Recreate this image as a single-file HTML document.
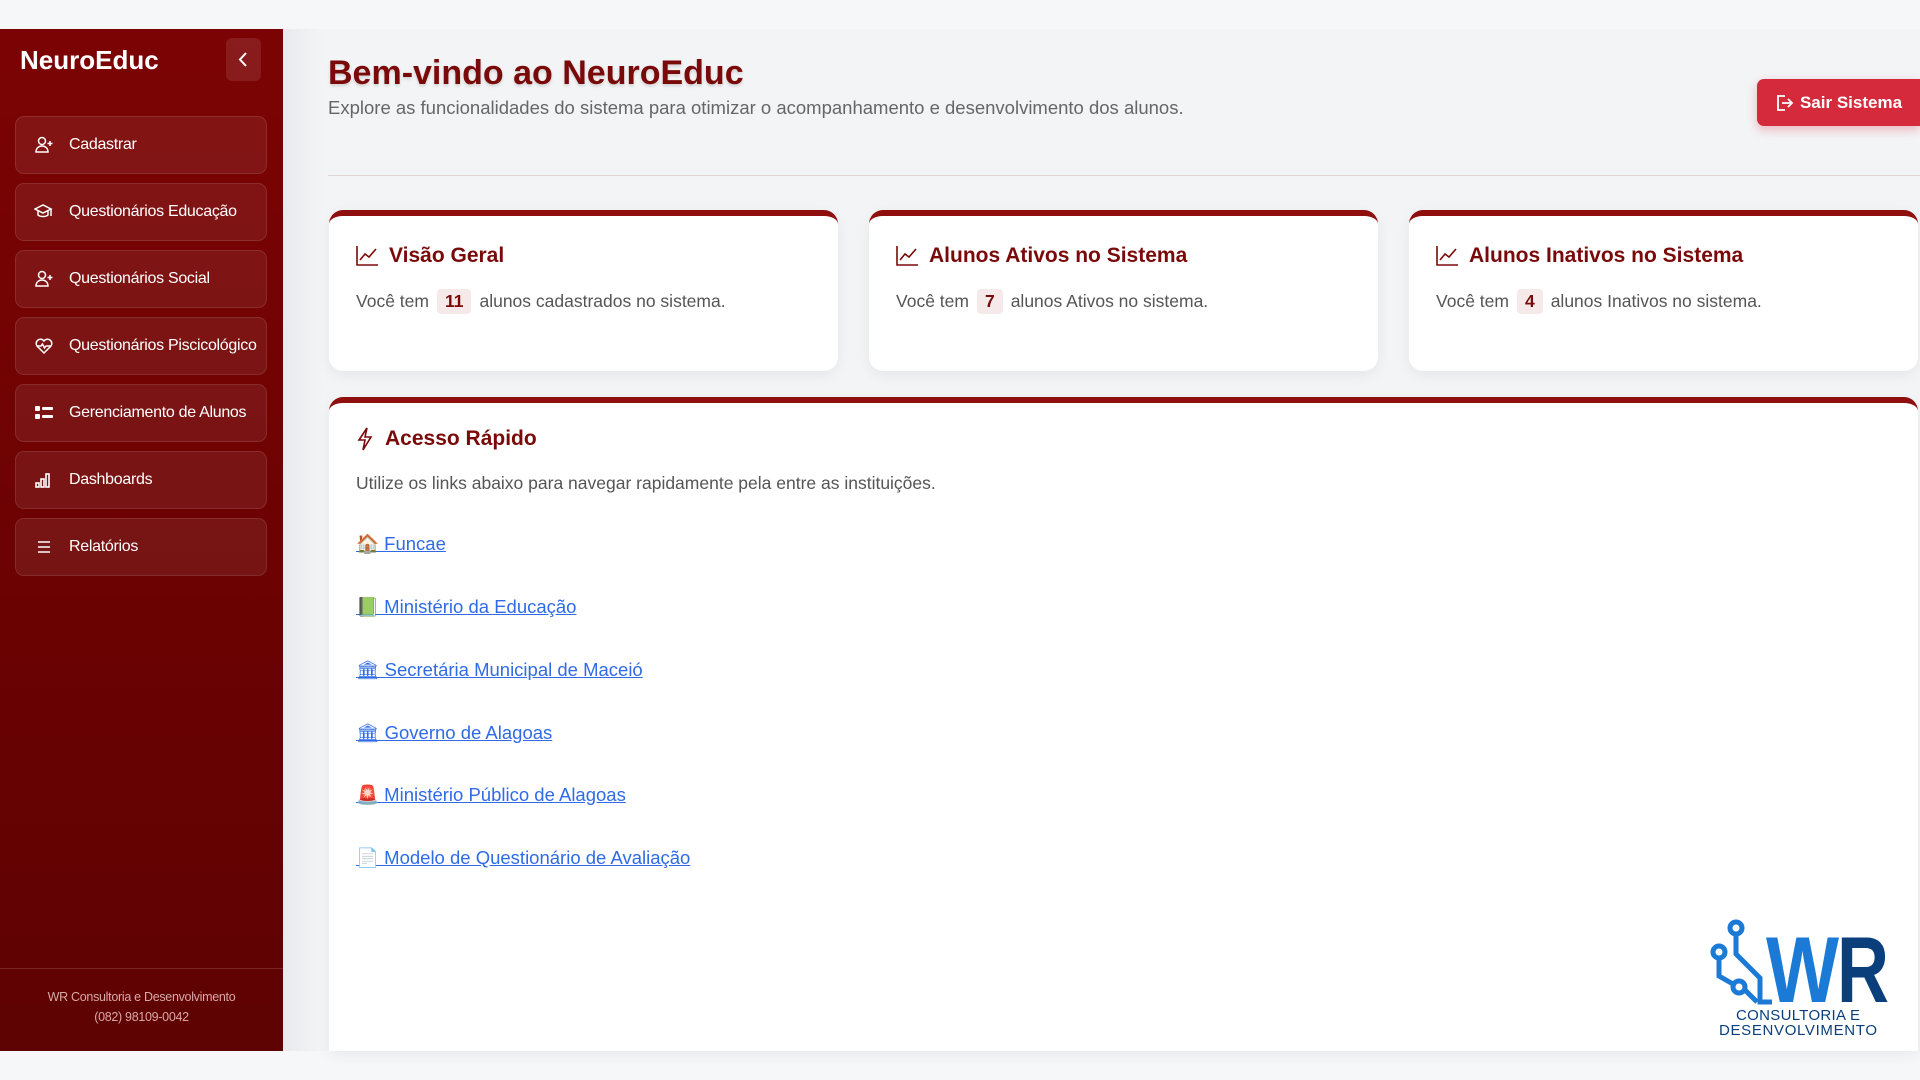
<!DOCTYPE html>
<html><head><meta charset="utf-8"><style>
*{box-sizing:border-box;margin:0;padding:0}
body{width:1920px;height:1080px;background:#f6f7f9;font-family:"Liberation Sans",sans-serif;position:relative;overflow:hidden}
.sb{position:absolute;left:0;top:29px;width:283px;height:1022px;background:linear-gradient(180deg,#7c0303,#5e0202)}
.brand{position:absolute;left:20px;top:16px;color:#fff;font-size:26px;font-weight:bold}
.col{position:absolute;left:226px;top:9px;width:35px;height:43px;background:rgba(255,255,255,.1);border-radius:6px}
.item{position:absolute;left:15px;width:252px;height:58px;background:rgba(255,255,255,.07);border:1px solid rgba(255,255,255,.1);border-radius:9px;color:#fff;font-size:16px;display:flex;align-items:center;padding-left:18px;white-space:nowrap;letter-spacing:-.3px}
.item svg{width:20px;height:20px;margin-right:15px;flex:none}
.foot{position:absolute;left:0;top:939px;width:283px;border-top:1px solid rgba(255,255,255,.15);text-align:center;color:#d8a9a9;font-size:12.5px;line-height:20px;padding-top:18px;letter-spacing:-.3px}
.main{position:absolute;left:283px;top:29px;width:1637px;height:1022px;background:linear-gradient(90deg,#e9eaed,#f3f4f6 40px,#f3f4f6)}
h1{position:absolute;left:328px;top:54px;font-size:34px;color:#7a0a0a;font-weight:bold;text-shadow:0 2px 3px rgba(0,0,0,.15)}
.sub{position:absolute;left:328px;top:97px;font-size:18.5px;color:#666}
.hr{position:absolute;left:328px;top:175px;width:1592px;height:1px;background:#e3d6d6}
.btn{position:absolute;left:1757px;top:79px;width:163px;height:47px;background:#d42a3c;border-radius:7px 0 0 7px;color:#fff;font-weight:bold;font-size:17px;display:flex;align-items:center;justify-content:center;box-shadow:0 4px 10px rgba(212,42,60,.3)}
.card{position:absolute;background:#fff;border-radius:14px;border-top:6px solid #8f0e0e;box-shadow:0 4px 14px rgba(0,0,0,.06)}
.ct{position:absolute;left:26px;top:28px;font-size:21px;font-weight:bold;color:#7a0a0a;display:flex;align-items:center}
.ct svg{margin-right:10px}
.cx{position:absolute;left:27px;top:73px;font-size:17.5px;color:#555;display:flex;align-items:center}
.num{display:inline-block;background:#f6e9e9;color:#7a0a0a;font-weight:bold;padding:2px 8px;border-radius:4px;margin:0 8px}
.lk{position:absolute;left:356px;font-size:18.5px;color:#2f6be6;text-decoration:underline}
</style></head><body>
<div class="sb">
<div class="brand">NeuroEduc</div>
<div class="col"><svg width="35" height="43" viewBox="0 0 35 43"><path d="M20 15l-6 6.5 6 6.5" fill="none" stroke="#fff" stroke-width="2"/></svg></div>
<div class="item" style="top:87px"><svg viewBox="0 0 20 20" fill="none" stroke="#fff" stroke-width="1.5"><circle cx="8" cy="6" r="3.5"/><path d="M2 17c0-4 3-6 6-6s6 2 6 6z"/><path d="M16 6v5M13.5 8.5h5"/></svg>Cadastrar</div>
<div class="item" style="top:154px"><svg viewBox="0 0 20 20" fill="none" stroke="#fff" stroke-width="1.5"><path d="M1 7l8-4 8 4-8 4z"/><path d="M4 9v4c2 2 8 2 10 0V9"/><path d="M17 7v7"/></svg>Questionários Educação</div>
<div class="item" style="top:221px"><svg viewBox="0 0 20 20" fill="none" stroke="#fff" stroke-width="1.5"><circle cx="8" cy="6" r="3.5"/><path d="M2 17c0-4 3-6 6-6s6 2 6 6z"/><path d="M16 6v5M13.5 8.5h5"/></svg>Questionários Social</div>
<div class="item" style="top:288px"><svg viewBox="0 0 20 20" fill="none" stroke="#fff" stroke-width="1.5"><path d="M10 17L3 10a4 4 0 017-5 4 4 0 017 5z"/><path d="M3 10h4l1.5-2 2 4 1.5-2h5"/></svg>Questionários Piscicológico</div>
<div class="item" style="top:355px"><svg viewBox="0 0 20 20" fill="#fff"><rect x="1" y="3" width="5" height="5" rx="1"/><rect x="8" y="4" width="11" height="3" rx="1"/><rect x="1" y="11" width="5" height="5" rx="1"/><rect x="8" y="12" width="11" height="3" rx="1"/></svg>Gerenciamento de Alunos</div>
<div class="item" style="top:422px"><svg viewBox="0 0 20 20" fill="none" stroke="#fff" stroke-width="1.6"><rect x="2" y="13" width="3" height="4"/><rect x="7" y="9" width="3" height="8"/><rect x="12" y="4" width="3" height="13"/></svg>Dashboards</div>
<div class="item" style="top:489px"><svg viewBox="0 0 20 20" stroke="#fff" stroke-width="1.6"><path d="M4 5h12M4 10h12M4 15h12"/></svg>Relatórios</div>
<div class="foot">WR Consultoria e Desenvolvimento<br>(082) 98109-0042</div>
</div>
<div class="main"></div>
<h1>Bem-vindo ao NeuroEduc</h1>
<div class="sub">Explore as funcionalidades do sistema para otimizar o acompanhamento e desenvolvimento dos alunos.</div>
<div class="btn"><svg width="20" height="18" viewBox="0 0 20 18" fill="none" stroke="#fff" stroke-width="1.8" style="margin-right:5px"><path d="M10 2H3v14h7"/><path d="M7 9h10M13 5l4 4-4 4"/></svg>Sair Sistema</div>
<div class="hr"></div>

<div class="card" style="left:329px;top:210px;width:509px;height:161px"><div class="ct"><svg width="24" height="22" viewBox="0 0 24 22" fill="none" stroke="#7a0a0a" stroke-width="1.6"><path d="M2 1v19h21"/><path d="M5 15l5-6 4 3 7-8"/></svg>Visão Geral</div><div class="cx">Você tem <span class="num">11</span> alunos cadastrados no sistema.</div></div>
<div class="card" style="left:869px;top:210px;width:509px;height:161px"><div class="ct"><svg width="24" height="22" viewBox="0 0 24 22" fill="none" stroke="#7a0a0a" stroke-width="1.6"><path d="M2 1v19h21"/><path d="M5 15l5-6 4 3 7-8"/></svg>Alunos Ativos no Sistema</div><div class="cx">Você tem <span class="num">7</span> alunos Ativos no sistema.</div></div>
<div class="card" style="left:1409px;top:210px;width:509px;height:161px"><div class="ct"><svg width="24" height="22" viewBox="0 0 24 22" fill="none" stroke="#7a0a0a" stroke-width="1.6"><path d="M2 1v19h21"/><path d="M5 15l5-6 4 3 7-8"/></svg>Alunos Inativos no Sistema</div><div class="cx">Você tem <span class="num">4</span> alunos Inativos no sistema.</div></div>

<div class="card" style="left:329px;top:397px;width:1589px;height:654px;border-radius:14px 14px 0 0"><div class="ct" style="top:24px"><svg width="20" height="24" viewBox="0 0 20 24" fill="none" stroke="#7a0a0a" stroke-width="1.6"><path d="M12 1L4 13h6l-2 10 8-13h-6z"/></svg>Acesso Rápido</div><div class="cx" style="top:70px">Utilize os links abaixo para navegar rapidamente pela entre as instituições.</div></div>
<div class="lk" style="top:533px">🏠 Funcae</div>
<div class="lk" style="top:596px">📗 Ministério da Educação</div>
<div class="lk" style="top:659px">🏛 Secretária Municipal de Maceió</div>
<div class="lk" style="top:722px">🏛 Governo de Alagoas</div>
<div class="lk" style="top:784px">🚨 Ministério Público de Alagoas</div>
<div class="lk" style="top:847px">📄 Modelo de Questionário de Avaliação</div>

<svg style="position:absolute;left:1700px;top:900px" width="210" height="140" viewBox="0 0 210 140">
<g fill="none" stroke="#1b7ad6" stroke-width="5"><circle cx="36" cy="28" r="6"/><circle cx="19" cy="52" r="6"/><circle cx="39" cy="87" r="6"/><path d="M36 34v20l24 24v24h12"/><path d="M19 58v18l14 8M45 90l12 12"/></g>
<text x="66" y="102" textLength="73" lengthAdjust="spacingAndGlyphs" font-family="Liberation Sans" font-weight="bold" font-size="94" fill="#1b7ad6">W</text>
<text x="137" y="102" textLength="52" lengthAdjust="spacingAndGlyphs" font-family="Liberation Sans" font-weight="bold" font-size="94" fill="#0a3f7c">R</text>
<text x="98" y="120" text-anchor="middle" textLength="124" font-family="Liberation Sans" font-size="15" fill="#0a3f7c">CONSULTORIA E</text>
<text x="98" y="135" text-anchor="middle" textLength="158" font-family="Liberation Sans" font-size="15" fill="#0a3f7c">DESENVOLVIMENTO</text>
</svg>
</body></html>
